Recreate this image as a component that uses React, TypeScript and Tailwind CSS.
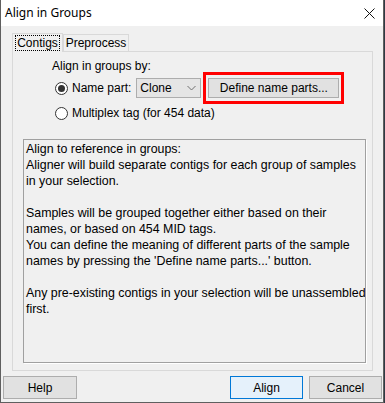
import React from 'react';

const ui = { fontFamily: '"Liberation Sans", Arial, sans-serif' };

function Radio({ checked }: { checked?: boolean }) {
    return (
        <span className="w-[13px] h-[13px] rounded-full border border-[#333333] bg-white flex items-center justify-center shrink-0">
            {checked && <span className="w-[7px] h-[7px] rounded-full bg-[#333333]" />}
        </span>
    );
}

function Button({ label, primary, w }: { label: string; primary?: boolean; w: string }) {
    return (
        <div
            className={`${w} h-[23px] flex items-center justify-center text-[12px] text-black border ${primary ? 'bg-[#e5f1fb] border-[#0078d7]' : 'bg-[#e1e1e1] border-[#adadad]'}`}
        >
            {label}
        </div>
    );
}

const lines = [
    'Align to reference in groups:',
    'Aligner will build separate contigs for each group of samples',
    'in your selection.',
    '',
    'Samples will be grouped together either based on their',
    'names, or based on 454 MID tags.',
    'You can define the meaning of different parts of the sample',
    "names by pressing the 'Define name parts...' button.",
    '',
    'Any pre-existing contigs in your selection will be unassembled',
    'first.',
];

export default function App() {
    return (
        <div className="w-[385px] h-[403px] bg-[#2f3a44] overflow-hidden" style={ui}>
            <div className="w-[384px] h-[403px] flex flex-col bg-[#f0f0f0] border-x border-b border-[#5f5f5f]">
                {/* title bar */}
                <div className="h-[26px] bg-white flex items-center justify-between pl-[4px] pr-[8px] shrink-0">
                    <span className="text-[12px] text-black" style={{ fontFamily: '"Noto Sans", "Liberation Sans", sans-serif' }}>
                        Align in Groups
                    </span>
                    <svg width="11" height="11" viewBox="0 0 11 11" className="mt-[1px]">
                        <path d="M0.5 0.5 L10.5 10.5 M10.5 0.5 L0.5 10.5" stroke="#111" strokeWidth="1" />
                    </svg>
                </div>

                {/* tabs */}
                <div className="ml-[11px] mt-[6px] flex items-end h-[19px]">
                    <div className="w-[51px] h-[19px] border border-b-0 border-[#d9d9d9] bg-[#f0f0f0] flex items-center justify-center relative z-10 -mb-[1px] pb-[1px]">
                        <span className="border border-dotted border-black px-[1px] leading-[14px] text-[12px] text-black">Contigs</span>
                    </div>
                    <div className="w-[66px] h-[17px] border border-b-0 border-[#d9d9d9] bg-[#f0f0f0] flex items-center justify-center text-[12px] text-black">
                        Preprocess
                    </div>
                </div>

                {/* panel */}
                <div className="ml-[11px] w-[361px] h-[320px] border border-[#d9d9d9] flex flex-col">
                    <div className="pl-[39px] pt-[6px] text-[12px] leading-[16px] text-black">Align in groups by:</div>
                    <div className="flex items-center mt-[4px] h-[20px]">
                        <div className="ml-[42px] flex items-center gap-[4px] text-[12px] text-black">
                            <Radio checked />
                            <span>Name part:</span>
                        </div>
                        <div className="ml-[5px] w-[65px] h-[20px] bg-[#e5e5e5] border border-[#adadad] flex items-center justify-between pl-[3px] pr-[4px] text-[12px] text-black">
                            <span>Clone</span>
                            <svg width="9" height="6" viewBox="0 0 9 6">
                                <path d="M0.5 1 L4.5 5 L8.5 1" fill="none" stroke="#707070" strokeWidth="1" />
                            </svg>
                        </div>
                        <div className="relative ml-[7px]">
                            <div className="w-[131px] h-[20px] bg-[#e1e1e1] border border-[#adadad] flex items-center justify-center text-[12px] text-black">
                                Define name parts...
                            </div>
                            <div className="absolute -left-[5px] -right-[5px] -top-[6px] -bottom-[6px] border-[3px] border-[#ff0000]" />
                        </div>
                    </div>
                    <div className="flex items-center mt-[7px] ml-[42px] gap-[4px] h-[16px] text-[12px] text-black">
                        <Radio />
                        <span>Multiplex tag (for 454 data)</span>
                    </div>

                    {/* description */}
                    <div className="ml-[10px] mt-[18px] w-[343px] h-[224px] border border-[#a0a0a0] shadow-[1px_1px_0_#ffffff] bg-[#f0f0f0] pl-[2px] pt-[1px] text-[12.4px] leading-[16px] text-black overflow-hidden">
                        {lines.map((l, i) => (
                            <div key={i} className="h-[16px] whitespace-nowrap">{l}</div>
                        ))}
                    </div>
                </div>

                {/* buttons */}
                <div className="flex items-center mt-[5px] pl-[2px]">
                    <Button label="Help" w="w-[74px]" />
                    <div className="flex-1" />
                    <Button label="Align" primary w="w-[73px]" />
                    <div className="w-[6px]" />
                    <Button label="Cancel" w="w-[73px]" />
                    <div className="w-[1px]" />
                </div>
            </div>
        </div>
    );
}
